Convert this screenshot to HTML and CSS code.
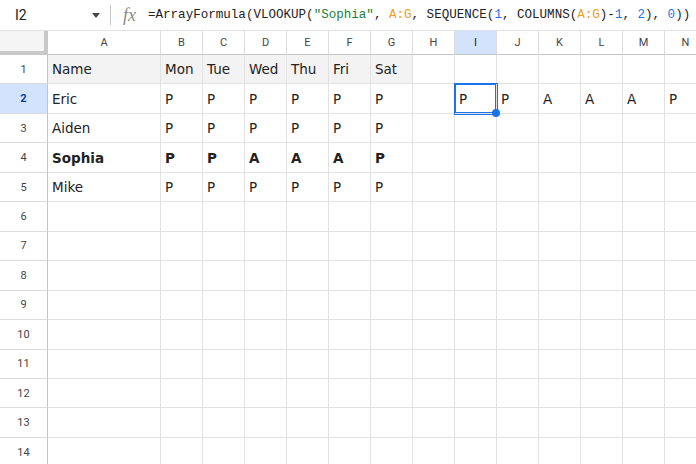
FILE: index.html
```html
<!DOCTYPE html>
<html>
<head>
<meta charset="utf-8">
<link rel="stylesheet" href="styles.css">
</head>
<body>
<div class="toolbar">
  <div class="namebox"><span class="ref">I2</span><span class="caret"></span></div>
  <div class="sep"></div>
  <div class="fx">fx</div>
  <div class="formula">=ArrayFormula(VLOOKUP(<span class="str">"Sophia"</span>, <span class="rng">A:G</span>, SEQUENCE(<span class="num">1</span>, COLUMNS(<span class="rng">A:G</span>)-<span class="num">1</span>, <span class="num">2</span>), <span class="num">0</span>))</div>
</div>
<div class="sheet">
  <div class="row head">
    <div class="corner"></div>
    <div class="ch">A</div><div class="ch">B</div><div class="ch">C</div><div class="ch">D</div><div class="ch">E</div><div class="ch">F</div><div class="ch">G</div><div class="ch">H</div><div class="ch sel">I</div><div class="ch">J</div><div class="ch">K</div><div class="ch">L</div><div class="ch">M</div><div class="ch">N</div>
  </div>
  <div class="row">
    <div class="rh">1</div>
    <div class="c g">Name</div><div class="c g">Mon</div><div class="c g">Tue</div><div class="c g">Wed</div><div class="c g">Thu</div><div class="c g">Fri</div><div class="c g">Sat</div><div class="c"></div><div class="c"></div><div class="c"></div><div class="c"></div><div class="c"></div><div class="c"></div><div class="c"></div>
  </div>
  <div class="row">
    <div class="rh sel">2</div>
    <div class="c">Eric</div><div class="c">P</div><div class="c">P</div><div class="c">P</div><div class="c">P</div><div class="c">P</div><div class="c">P</div><div class="c"></div><div class="c active">P</div><div class="c">P</div><div class="c">A</div><div class="c">A</div><div class="c">A</div><div class="c">P</div>
  </div>
  <div class="row">
    <div class="rh">3</div>
    <div class="c">Aiden</div><div class="c">P</div><div class="c">P</div><div class="c">P</div><div class="c">P</div><div class="c">P</div><div class="c">P</div><div class="c"></div><div class="c"></div><div class="c"></div><div class="c"></div><div class="c"></div><div class="c"></div><div class="c"></div>
  </div>
  <div class="row">
    <div class="rh">4</div>
    <div class="c b">Sophia</div><div class="c b">P</div><div class="c b">P</div><div class="c b">A</div><div class="c b">A</div><div class="c b">A</div><div class="c b">P</div><div class="c"></div><div class="c"></div><div class="c"></div><div class="c"></div><div class="c"></div><div class="c"></div><div class="c"></div>
  </div>
  <div class="row">
    <div class="rh">5</div>
    <div class="c">Mike</div><div class="c">P</div><div class="c">P</div><div class="c">P</div><div class="c">P</div><div class="c">P</div><div class="c">P</div><div class="c"></div><div class="c"></div><div class="c"></div><div class="c"></div><div class="c"></div><div class="c"></div><div class="c"></div>
  </div>
  <div class="row"><div class="rh">6</div><div class="c"></div><div class="c"></div><div class="c"></div><div class="c"></div><div class="c"></div><div class="c"></div><div class="c"></div><div class="c"></div><div class="c"></div><div class="c"></div><div class="c"></div><div class="c"></div><div class="c"></div><div class="c"></div></div>
  <div class="row"><div class="rh">7</div><div class="c"></div><div class="c"></div><div class="c"></div><div class="c"></div><div class="c"></div><div class="c"></div><div class="c"></div><div class="c"></div><div class="c"></div><div class="c"></div><div class="c"></div><div class="c"></div><div class="c"></div><div class="c"></div></div>
  <div class="row"><div class="rh">8</div><div class="c"></div><div class="c"></div><div class="c"></div><div class="c"></div><div class="c"></div><div class="c"></div><div class="c"></div><div class="c"></div><div class="c"></div><div class="c"></div><div class="c"></div><div class="c"></div><div class="c"></div><div class="c"></div></div>
  <div class="row"><div class="rh">9</div><div class="c"></div><div class="c"></div><div class="c"></div><div class="c"></div><div class="c"></div><div class="c"></div><div class="c"></div><div class="c"></div><div class="c"></div><div class="c"></div><div class="c"></div><div class="c"></div><div class="c"></div><div class="c"></div></div>
  <div class="row"><div class="rh">10</div><div class="c"></div><div class="c"></div><div class="c"></div><div class="c"></div><div class="c"></div><div class="c"></div><div class="c"></div><div class="c"></div><div class="c"></div><div class="c"></div><div class="c"></div><div class="c"></div><div class="c"></div><div class="c"></div></div>
  <div class="row"><div class="rh">11</div><div class="c"></div><div class="c"></div><div class="c"></div><div class="c"></div><div class="c"></div><div class="c"></div><div class="c"></div><div class="c"></div><div class="c"></div><div class="c"></div><div class="c"></div><div class="c"></div><div class="c"></div><div class="c"></div></div>
  <div class="row"><div class="rh">12</div><div class="c"></div><div class="c"></div><div class="c"></div><div class="c"></div><div class="c"></div><div class="c"></div><div class="c"></div><div class="c"></div><div class="c"></div><div class="c"></div><div class="c"></div><div class="c"></div><div class="c"></div><div class="c"></div></div>
  <div class="row"><div class="rh">13</div><div class="c"></div><div class="c"></div><div class="c"></div><div class="c"></div><div class="c"></div><div class="c"></div><div class="c"></div><div class="c"></div><div class="c"></div><div class="c"></div><div class="c"></div><div class="c"></div><div class="c"></div><div class="c"></div></div>
  <div class="row"><div class="rh">14</div><div class="c"></div><div class="c"></div><div class="c"></div><div class="c"></div><div class="c"></div><div class="c"></div><div class="c"></div><div class="c"></div><div class="c"></div><div class="c"></div><div class="c"></div><div class="c"></div><div class="c"></div><div class="c"></div></div>
</div>
</body>
</html>
```
FILE: styles.css
```css
* { box-sizing: border-box; }
html, body {
  margin: 0;
  padding: 0;
  width: 696px;
  height: 464px;
  overflow: hidden;
  background: #fff;
}
body {
  font-family: "DejaVu Sans", Verdana, sans-serif;
  color: #222;
}
.toolbar {
  height: 31px;
  border-bottom: 1px solid #e1e1e1;
  display: flex;
  align-items: center;
}
.namebox {
  width: 110px;
  display: flex;
  align-items: center;
  padding-left: 15px;
  font-family: Roboto, "Liberation Sans", sans-serif;
  font-size: 14px;
  color: #222;
}
.ref { flex: 1; }
.caret {
  width: 0;
  height: 0;
  border-left: 4.5px solid transparent;
  border-right: 4.5px solid transparent;
  border-top: 5px solid #444;
  margin-right: 10px;
}
.sep {
  width: 1px;
  height: 20px;
  background: #c7c7c7;
}
.fx {
  width: 37px;
  padding-left: 12px;
  font-family: "Liberation Serif", serif;
  font-style: italic;
  font-size: 18px;
  color: #8a8a8a;
  line-height: 1;
}
.formula {
  font-family: "Liberation Mono", "DejaVu Sans Mono", monospace;
  font-size: 12.55px;
  color: #222;
  white-space: nowrap;
}
.str { color: #188038; }
.rng { color: #f29e1f; }
.num { color: #1a73e8; }

.sheet { width: 720px; }
.row {
  display: grid;
  grid-template-columns: 48px 113px repeat(13, 42px);
  height: 29.46px;
}
.row.head { height: 24px; }
.corner {
  background: #f5f5f5;
  box-shadow: inset -4px -4px 0 #c8c8c8;
}
.ch {
  font-family: Roboto, "Liberation Sans", sans-serif;
  font-size: 11px;
  color: #444;
  display: flex;
  align-items: center;
  justify-content: center;
  border-right: 1px solid #dcdcdc;
  border-bottom: 1px solid #c4c4c4;
}
.ch.sel { background: #d3e3fd; color: #222; }
.rh {
  font-family: Roboto, "Liberation Sans", sans-serif;
  font-size: 11px;
  color: #444;
  display: flex;
  align-items: center;
  justify-content: center;
  border-right: 1px solid #c4c4c4;
  border-bottom: 1px solid #dcdcdc;
}
.rh.sel { background: #d3e3fd; color: #0842a0; font-weight: bold; }
.c {
  font-size: 13.5px;
  color: #222;
  display: flex;
  align-items: center;
  padding: 0 4px;
  border-right: 1px solid #e2e2e2;
  border-bottom: 1px solid #e2e2e2;
  white-space: nowrap;
}
.c.g { background: #f3f3f3; }
.c.b { font-weight: bold; }
.c.active {
  position: relative;
  box-shadow: 0 0 0 1px #1a73e8, inset 0 0 0 1px #1a73e8;
  z-index: 1;
}
.c.active::after {
  content: "";
  position: absolute;
  right: -4px;
  bottom: -4px;
  width: 8px;
  height: 8px;
  border-radius: 50%;
  background: #1a73e8;
}
```
